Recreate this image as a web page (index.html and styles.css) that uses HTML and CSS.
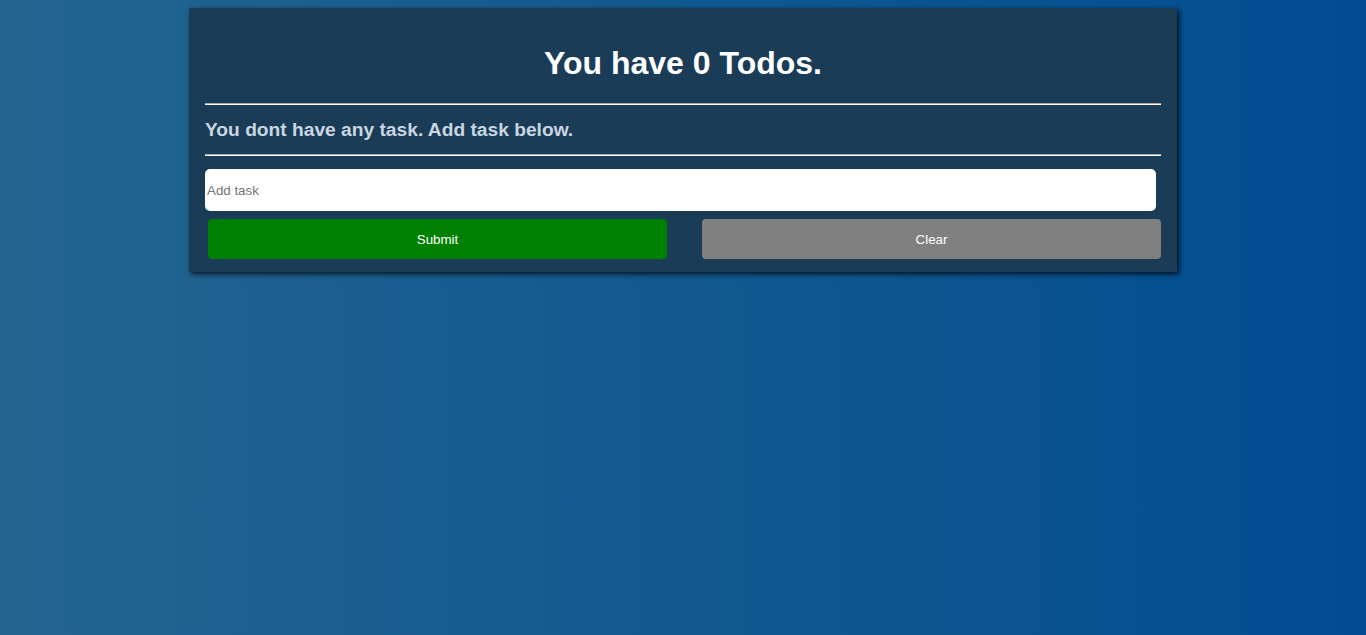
FILE: index.html
```html
<!DOCTYPE html>
<html>
<head>
<meta charset="utf-8">
<link rel="stylesheet" href="styles.css">
</head>
<body>
<div class="card">
  <h1 class="title">You have 0 Todos.</h1>
  <hr class="rule">
  <h3 class="empty">You dont have any task. Add task below.</h3>
  <hr class="rule">
  <form class="form">
    <input class="task-input" type="text" placeholder="Add task">
    <div class="actions">
      <button type="button" class="btn btn-submit">Submit</button>
      <button type="button" class="btn btn-clear">Clear</button>
    </div>
  </form>
</div>
</body>
</html>
```
FILE: styles.css
```css
html, body {
  height: 100%;
}
body {
  margin: 0;
  padding: 8px 0 0;
  box-sizing: border-box;
  background: linear-gradient(to right, #246590, #004d91);
  font-family: "Liberation Sans", Arial, sans-serif;
}
.card {
  width: 956px;
  margin: 0 auto;
  padding: 16px 16px 13px;
  background: #1a3c57;
  box-shadow: 2px 2px 5px rgba(0, 0, 0, 0.8);
}
.title {
  margin: 21px 0 21px;
  font-size: 32px;
  font-weight: bold;
  color: #ffffff;
  text-align: center;
}
.rule {
  margin: 0;
  border: 0;
  height: 2px;
  background: linear-gradient(to bottom, #a9a9a9 0 1px, #ffffff 1px 2px);
}
.empty {
  margin: 14px 0 13px;
  font-size: 19.2px;
  line-height: 22px;
  font-weight: bold;
  color: #c9d6e2;
}
.form {
  margin: 13px 0 0;
}
.task-input {
  display: block;
  box-sizing: border-box;
  width: 951px;
  height: 42px;
  margin: 0;
  padding: 0 2px;
  border: 0;
  border-radius: 5px;
  background: #ffffff;
  font-family: "Liberation Sans", Arial, sans-serif;
  font-size: 13.33px;
  outline: none;
}
.task-input::placeholder {
  color: #757575;
}
.actions {
  display: flex;
  justify-content: space-between;
  padding-left: 3px;
  margin-top: 8px;
}
.btn {
  width: 459px;
  height: 40px;
  border: 0;
  border-radius: 4px;
  color: #ffffff;
  font-family: "Liberation Sans", Arial, sans-serif;
  font-size: 13.33px;
  cursor: pointer;
}
.btn-submit {
  background: #008000;
}
.btn-clear {
  background: #808080;
}
```
